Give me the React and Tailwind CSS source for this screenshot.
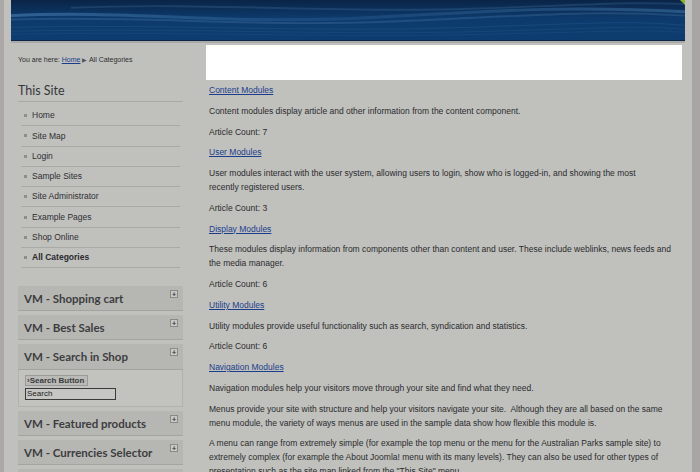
import React from 'react';

const menu = [
  'Home',
  'Site Map',
  'Login',
  'Sample Sites',
  'Site Administrator',
  'Example Pages',
  'Shop Online',
];

const modules = ['VM - Shopping cart', 'VM - Best Sales'];
const modulesAfter = ['VM - Featured products', 'VM - Currencies Selector'];

function Header() {
  return (
    <div className="relative h-[41px] border-b border-[#0a2748]">
      <svg className="absolute inset-0 h-full w-full" viewBox="0 0 674 41" preserveAspectRatio="none">
        <defs>
          <linearGradient id="hdr" x1="0" y1="0" x2="0" y2="1">
            <stop offset="0" stopColor="#0a2446" />
            <stop offset="0.45" stopColor="#0d3a6c" />
            <stop offset="1" stopColor="#0d3d70" />
          </linearGradient>
          <linearGradient id="band" x1="0" y1="0" x2="1" y2="0">
            <stop offset="0" stopColor="#3f74a6" stopOpacity="0.7" />
            <stop offset="0.5" stopColor="#2d6196" stopOpacity="0.35" />
            <stop offset="1" stopColor="#3a6d9e" stopOpacity="0.6" />
          </linearGradient>
        </defs>
        <rect width="674" height="41" fill="url(#hdr)" />
        <path d="M0 16 C120 10 220 26 360 18 S560 6 674 12" fill="none" stroke="url(#band)" strokeWidth="3" />
        <path d="M0 20 C140 16 240 28 380 22 S580 10 674 16" fill="none" stroke="#5a8cbc" strokeOpacity="0.25" strokeWidth="2" />
        <path d="M60 8 C200 2 320 14 460 9 S620 2 674 4" fill="none" stroke="#4b7fb0" strokeOpacity="0.25" strokeWidth="2" />
        <path d="M0 28 C160 24 300 34 460 28 S620 22 674 26" fill="none" stroke="#2a5b8e" strokeOpacity="0.4" strokeWidth="1" />
        <path d="M0 32 C180 28 320 37 480 32 S630 27 674 30" fill="none" stroke="#2a5b8e" strokeOpacity="0.35" strokeWidth="1" />
        <path d="M0 35 C180 32 320 39 480 35 S630 31 674 33" fill="none" stroke="#2a5b8e" strokeOpacity="0.3" strokeWidth="1" />
        <path d="M669 0 L674 0 L674 5 Z" fill="#8db22c" />
      </svg>
    </div>
  );
}

function PlusBox() {
  return (
    <span className="absolute right-[5px] top-[4px] flex h-[8px] w-[8px] items-center justify-center border border-[#8a8b88] bg-[#c9cac6] text-[8px] leading-none text-[#333]">
      +
    </span>
  );
}

function ModuleBox({ title }) {
  return (
    <div className="relative mb-[4px] flex h-[25px] items-center border-b border-[#a3a4a0] bg-[#b6b7b3] pl-[6px] font-['Lato',sans-serif] text-[11.5px] font-bold text-[#3d3d3f]">
      {title}
      {title && <PlusBox />}
    </div>
  );
}

function Para({ children, link }) {
  return (
    <p className={'mb-[6.75px] whitespace-nowrap leading-[14px] ' + (link ? 'text-[#1b3d8c] underline' : 'text-[#2b2b2d]')}>
      {children}
    </p>
  );
}

export default function App() {
  return (
    <div className="flex h-[472px] w-[700px] overflow-hidden bg-[#c0c1bd]">
      <div className="w-[4px] shrink-0 bg-[#aca8a8]" />
      <div className="w-[688px] shrink-0 px-[7px]">
        <Header />
        <div className="h-[2px] bg-[#a9aaa7]" />
        <div className="flex">
          {/* sidebar */}
          <div className="w-[195px] shrink-0 pl-[7px] pr-[23px] font-['Liberation_Sans',Arial,sans-serif]">
            <div className="mt-[11px] text-[7px] leading-[12px] text-[#2e2e30]">
              You are here: <span className="text-[#1b3d8c] underline">Home</span>{' '}
              <span className="text-[5.5px] text-[#555]">▶</span> All Categories
            </div>
            <div className="mt-[17px] border-b border-[#a9aaa6] pb-[2px] font-['Lato',sans-serif] text-[12.5px] leading-[16px] text-[#37373a]">
              This Site
            </div>
            <ul className="mx-[3px] mt-[4px]">
              {menu.map((m) => (
                <li key={m} className="flex h-[20.3px] items-center border-b border-[#a9aaa6] text-[8.5px] text-[#2e2e33]">
                  <span className="ml-[3px] mr-[5px] h-[3px] w-[3px] bg-[#8d8e8b]" />
                  {m}
                </li>
              ))}
              <li className="flex h-[20.3px] items-center border-b border-[#a9aaa6] text-[8.5px] font-bold text-[#2a2a2e]">
                <span className="ml-[3px] mr-[5px] h-[3px] w-[3px] bg-[#8d8e8b]" />
                All Categories
              </li>
            </ul>
            <div className="mt-[18px]">
              {modules.map((m) => (
                <ModuleBox key={m} title={m} />
              ))}
              <div className="mb-[4px]">
                <div className="relative flex h-[26px] items-center border-b border-[#a3a4a0] bg-[#b6b7b3] pl-[6px] font-['Lato',sans-serif] text-[11.5px] font-bold text-[#3d3d3f]">
                  VM - Search in Shop
                  <PlusBox />
                </div>
                <div className="flex h-[37px] flex-col items-start border border-t-0 border-[#b1b2ae] bg-[#c2c3bf] px-[6px] pt-[5px]">
                  <div className="h-[11px] border border-[#9a9b98] bg-[#babbb7] pl-[1px] pr-[3px] text-[8px] font-bold leading-[9px] text-[#3a3a3d]">
                    ›Search Button
                  </div>
                  <div className="mt-[2px] h-[12px] w-[91px] border border-[#3a3a3a] bg-[#c6c7c3] px-[1px] text-[8px] leading-[10px] text-[#222]">
                    Search
                  </div>
                </div>
              </div>
              {modulesAfter.map((m) => (
                <ModuleBox key={m} title={m} />
              ))}
              <ModuleBox title="" />
            </div>
          </div>
          {/* content */}
          <div className="flex-1 font-['Liberation_Sans',Arial,sans-serif] text-[8.5px]">
            <div className="mt-[2px] h-[35px] w-[476px] bg-white" />
            <div className="mt-[3px] pl-[3px] pr-[9px]">
              <Para link>Content Modules</Para>
              <Para>Content modules display article and other information from the content component.</Para>
              <Para>Article Count: 7</Para>
              <Para link>User Modules</Para>
              <Para>
                User modules interact with the user system, allowing users to login, show who is logged-in, and showing the most
                <br />
                recently registered users.
              </Para>
              <Para>Article Count: 3</Para>
              <Para link>Display Modules</Para>
              <Para>
                These modules display information from components other than content and user. These include weblinks, news feeds and
                <br />
                the media manager.
              </Para>
              <Para>Article Count: 6</Para>
              <Para link>Utility Modules</Para>
              <Para>Utility modules provide useful functionality such as search, syndication and statistics.</Para>
              <Para>Article Count: 6</Para>
              <Para link>Navigation Modules</Para>
              <Para>Navigation modules help your visitors move through your site and find what they need.</Para>
              <Para>
                Menus provide your site with structure and help your visitors navigate your site.&nbsp; Although they are all based on
                the same
                <br />
                menu module, the variety of ways menus are used in the sample data show how flexible this module is.
              </Para>
              <Para>
                A menu can range from extremely simple (for example the top menu or the menu for the Australian Parks sample site) to
                <br />
                extremely complex (for example the About Joomla! menu with its many levels). They can also be used for other types of
                <br />
                presentation such as the site map linked from the "This Site" menu.
              </Para>
            </div>
          </div>
        </div>
      </div>
      <div className="w-[8px] shrink-0 bg-[#aaa5a5]" />
    </div>
  );
}
